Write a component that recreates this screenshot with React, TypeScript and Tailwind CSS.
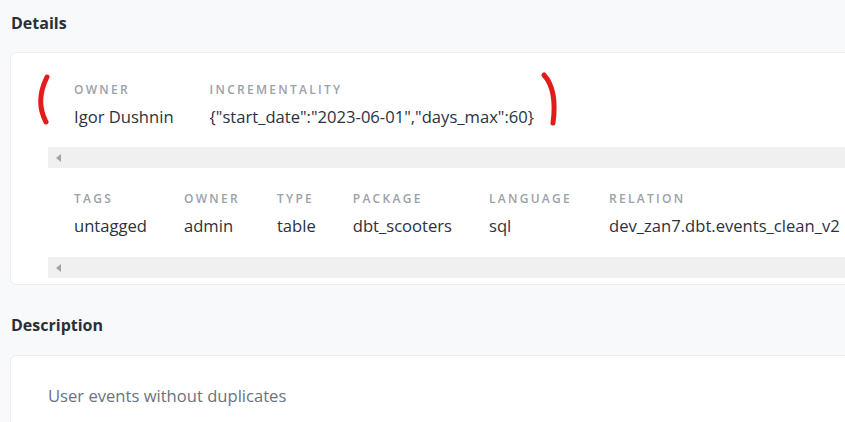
const font = { fontFamily: '"Open Sans", "Noto Sans", sans-serif' };

type Field = { label: string; value: string };

const top: Field[] = [
  { label: "Owner", value: "Igor Dushnin" },
  { label: "Incrementality", value: '{"start_date":"2023-06-01","days_max":60}' },
];

const meta: Field[] = [
  { label: "Tags", value: "untagged" },
  { label: "Owner", value: "admin" },
  { label: "Type", value: "table" },
  { label: "Package", value: "dbt_scooters" },
  { label: "Language", value: "sql" },
  { label: "Relation", value: "dev_zan7.dbt.events_clean_v2" },
];

function Scrollbar() {
  return (
    <div className="h-[21px] bg-[#f0f0f0] flex items-center pl-[8px]">
      <div className="w-0 h-0 border-y-[4px] border-y-transparent border-r-[5px] border-r-[#a3a3a3]" />
    </div>
  );
}

function FieldRow({ fields, first }: { fields: Field[]; first?: boolean }) {
  return (
    <div>
      <div
        className={
          first
            ? "flex gap-[36px] pl-[26px] pt-[28px] pb-[18px] whitespace-nowrap"
            : "flex gap-[37px] pl-[26px] pt-[22px] pb-[19px] whitespace-nowrap"
        }
      >
        {fields.map((f) => (
          <div key={f.label + f.value} className="flex flex-col">
            <span className="text-[12px] font-semibold uppercase tracking-[0.19em] text-[#9ba1a9] leading-[18px]">
              {f.label}
            </span>
            <span className="text-[16.6px] text-[#2b3240] leading-[24px] mt-[6px]">{f.value}</span>
          </div>
        ))}
      </div>
      <Scrollbar />
    </div>
  );
}

export default function App() {
  return (
    <div className="w-[845px] h-[422px] overflow-hidden bg-[#f8f9fb]" style={font}>
      <div className="pl-[10px]">
        <h2 className="text-[16px] font-bold text-[#2b2f36] pt-[11px] pl-[1px] leading-[24px]">Details</h2>
        <div className="relative mt-[17px] w-[900px] bg-white border border-[#eceef1] rounded-[6px] pl-[37px] pb-[6px]">
          <FieldRow fields={top} first />
          <FieldRow fields={meta} />
          <svg className="absolute left-[25px] top-[20px]" width="50" height="60" viewBox="0 0 50 60">
            <path d="M11 4 C 4 18, 2 34, 10 49" stroke="#e31b1b" strokeWidth="5" strokeLinecap="round" fill="none" />
          </svg>
          <svg className="absolute left-[520px] top-[18px]" width="50" height="60" viewBox="0 0 50 60">
            <path d="M13 4 C 22 14, 25 30, 22 52" stroke="#e31b1b" strokeWidth="5" strokeLinecap="round" fill="none" />
          </svg>
        </div>
        <h2 className="text-[16px] font-bold text-[#2b2f36] mt-[28px] pl-[1px] leading-[24px]">Description</h2>
        <div className="mt-[18px] w-[900px] h-[120px] bg-white border border-[#eceef1] rounded-[6px] pl-[37px] pt-[28px]">
          <p className="text-[16.6px] text-[#6b7280]">User events without duplicates</p>
        </div>
      </div>
    </div>
  );
}
